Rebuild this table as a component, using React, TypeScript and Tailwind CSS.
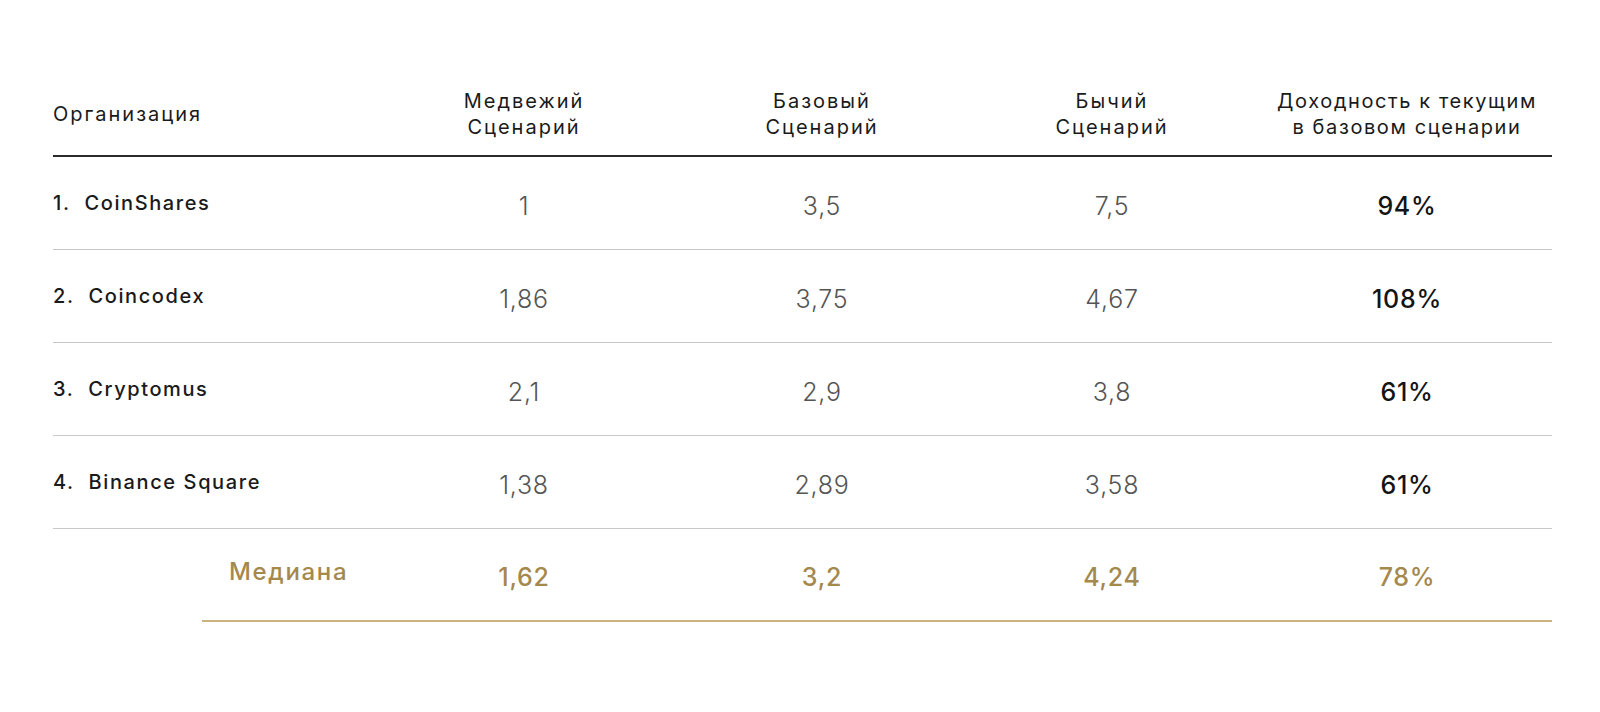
const ROWS = [
  { name: "CoinShares", bear: "1", base: "3,5", bull: "7,5", ret: "94%" },
  { name: "Coincodex", bear: "1,86", base: "3,75", bull: "4,67", ret: "108%" },
  { name: "Cryptomus", bear: "2,1", base: "2,9", bull: "3,8", ret: "61%" },
  { name: "Binance Square", bear: "1,38", base: "2,89", bull: "3,58", ret: "61%" },
];

const GRID = "grid grid-cols-[325px_292px_304px_276px_1fr] items-center";
const NUM = "pt-[8px] text-center text-[25px] font-light tracking-[0.03em] text-[#555]";

export default function App() {
  return (
    <div
      className="min-h-[712px] w-full bg-white pt-[72px] pl-[53px] pr-[48px] text-[#1a1a1a]"
      style={{ fontFamily: "Inter, 'Noto Sans', sans-serif" }}
    >
      {/* header */}
      <div className={`${GRID} h-[85px] border-b-2 border-[#2a2a2a] text-[20px] leading-[26px] tracking-[0.1em]`}>
        <div>Организация</div>
        <div className="text-center">
          Медвежий
          <br />
          Сценарий
        </div>
        <div className="text-center">
          Базовый
          <br />
          Сценарий
        </div>
        <div className="text-center">
          Бычий
          <br />
          Сценарий
        </div>
        <div className="pl-[12px] text-center tracking-[0.08em]">
          Доходность к текущим
          <br />
          в базовом сценарии
        </div>
      </div>

      {/* rows */}
      {ROWS.map((r, i) => (
        <div key={r.name} className={`${GRID} h-[93px] border-b border-[#c9c9c9]`}>
          <div className="text-[20px] font-medium tracking-[0.08em]">
            {i + 1}.&nbsp; {r.name}
          </div>
          <div className={NUM}>{r.bear}</div>
          <div className={NUM}>{r.base}</div>
          <div className={NUM}>{r.bull}</div>
          <div className="pt-[8px] pl-[12px] text-center text-[25px] font-medium tracking-[0.03em] text-[#141414]">
            {r.ret}
          </div>
        </div>
      ))}

      {/* median */}
      <div className="ml-[149px] grid h-[93px] grid-cols-[176px_292px_304px_276px_1fr] items-center border-b-2 border-[#cbb27f] text-[#a5884b]">
        <div className="pb-[6px] pl-[27px] text-[24px] font-medium tracking-[0.07em]">Медиана</div>
        <div className="pt-[6px] text-center text-[25px] font-medium tracking-[0.03em]">1,62</div>
        <div className="pt-[6px] text-center text-[25px] font-medium tracking-[0.03em]">3,2</div>
        <div className="pt-[6px] text-center text-[25px] font-medium tracking-[0.03em]">4,24</div>
        <div className="pt-[6px] pl-[12px] text-center text-[25px] font-medium tracking-[0.03em]">78%</div>
      </div>
    </div>
  );
}
